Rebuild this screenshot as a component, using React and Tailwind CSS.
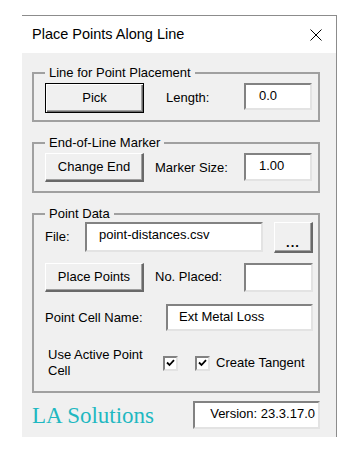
import React from 'react';

const FONT = { fontFamily: '"Liberation Sans", Arial, sans-serif' };

// raised 3D button, optional black "default" frame
function Btn({ children, className = '', isDefault }) {
  return (
    <div
      className={`flex items-center justify-center bg-[#f0f0f0] text-[13px] text-black ${
        isDefault
          ? 'border border-black shadow-[inset_1px_1px_0_#ffffff,inset_-1px_-1px_0_#696969,inset_-2px_-2px_0_#a0a0a0]'
          : 'border-t border-l border-white border-r-2 border-b-2 border-r-[#696969] border-b-[#696969] shadow-[inset_-1px_-1px_0_#a0a0a0]'
      } ${className}`}
    >
      {children}
    </div>
  );
}

// sunken edit field
function Field({ children, className = '' }) {
  return (
    <div
      className={`bg-white border-2 border-t-[#828282] border-l-[#828282] border-r-[#e3e3e3] border-b-[#e3e3e3] text-[13px] text-black leading-[16px] ${className}`}
    >
      {children}
    </div>
  );
}

function Group({ label, className = '', children }) {
  return (
    <div className={`relative border-2 border-[#a0a0a0] ${className}`}>
      <span className="absolute -top-[9px] left-[11px] bg-[#f0f0f0] px-[4px] text-[13px] leading-[16px] text-black">
        {label}
      </span>
      {children}
    </div>
  );
}

function CheckBox() {
  return (
    <div className="w-[15px] h-[15px] bg-white border-2 border-t-[#828282] border-l-[#828282] border-r-[#e3e3e3] border-b-[#e3e3e3] flex items-center justify-center">
      <svg width="9" height="8" viewBox="0 0 9 8">
        <path d="M1 3.5 L3.5 6 L8 1.2" fill="none" stroke="#000" strokeWidth="1.8" />
      </svg>
    </div>
  );
}

export default function App() {
  return (
    <div className="w-[357px] h-[455px] bg-white pt-[15px]" style={FONT}>
      <div className="ml-[22px] w-[315px] border-t border-r border-[#8c8c8c]">
        {/* Title bar */}
        <div className="h-[37px] bg-white flex items-center justify-between pl-[10px] pr-[14px]">
          <span className="text-[14.5px] text-black">Place Points Along Line</span>
          <svg width="12" height="12" viewBox="0 0 12 12">
            <path d="M0.5 0.5 L11.5 11.5 M11.5 0.5 L0.5 11.5" stroke="#000" strokeWidth="1" />
          </svg>
        </div>

        {/* Body */}
        <div className="h-[384px] bg-[#f0f0f0] pl-[10px] pt-[19px]">
          <Group label="Line for Point Placement" className="w-[288px] h-[50px]">
            <div className="flex items-start pl-[11px] pt-[9px]">
              <Btn isDefault className="w-[99px] h-[30px]">Pick</Btn>
              <span className="ml-[22px] w-[78px] h-[30px] leading-[30px] text-[13px] text-black">Length:</span>
              <Field className="w-[68px] h-[27px] pl-[13px] pt-[3px]">0.0</Field>
            </div>
          </Group>

          <Group label="End-of-Line Marker" className="w-[288px] h-[51px] mt-[20px]">
            <div className="flex items-start pl-[11px] pt-[9px]">
              <Btn className="w-[99px] h-[29px]">Change End</Btn>
              <span className="ml-[11px] w-[89px] h-[29px] leading-[29px] text-[13px] text-black">Marker Size:</span>
              <Field className="w-[68px] h-[28px] pl-[13px] pt-[3px]">1.00</Field>
            </div>
          </Group>

          <Group label="Point Data" className="w-[288px] h-[180px] mt-[20px]">
            <div className="pl-[11px] pt-[7px]">
              <div className="flex items-start">
                <span className="w-[40px] h-[29px] leading-[29px] text-[13px] text-black">File:</span>
                <Field className="w-[178px] h-[30px] pl-[12px] pt-[3px]">point-distances.csv</Field>
                <Btn className="ml-[11px] w-[39px] h-[31px] items-end pb-[3px]">
                  <span className="font-bold leading-[10px] tracking-[1px]">...</span>
                </Btn>
              </div>

              <div className="flex items-start mt-[10px]">
                <Btn className="w-[99px] h-[29px]">Place Points</Btn>
                <span className="ml-[11px] w-[89px] h-[29px] leading-[28px] text-[13px] text-black">No. Placed:</span>
                <Field className="w-[69px] h-[29px]" />
              </div>

              <div className="flex items-start mt-[12px]">
                <span className="w-[121px] h-[27px] leading-[27px] text-[13px] text-black">Point Cell Name:</span>
                <Field className="w-[147px] h-[27px] pl-[11px] pt-[3px]">Ext Metal Loss</Field>
              </div>

              <div className="flex items-center mt-[16px] pl-[3px]">
                <span className="w-[115px] text-[13px] leading-[16px] text-black">
                  Use Active Point
                  <br />
                  Cell
                </span>
                <CheckBox />
                <div className="ml-[17px]">
                  <CheckBox />
                </div>
                <span className="ml-[6px] text-[13px] leading-[16px] text-black">Create Tangent</span>
              </div>
            </div>
          </Group>

          <div className="flex items-start mt-[8px] w-[288px]">
            <span
              className="mt-[1px] text-[23px] leading-[28px] text-[#1fb8c1]"
              style={{ fontFamily: '"Liberation Serif", "Times New Roman", serif' }}
            >
              LA Solutions
            </span>
            <Field className="ml-auto w-[127px] h-[28px] text-right pr-[3px] pt-[3px]">Version: 23.3.17.0</Field>
          </div>
        </div>
      </div>
    </div>
  );
}
